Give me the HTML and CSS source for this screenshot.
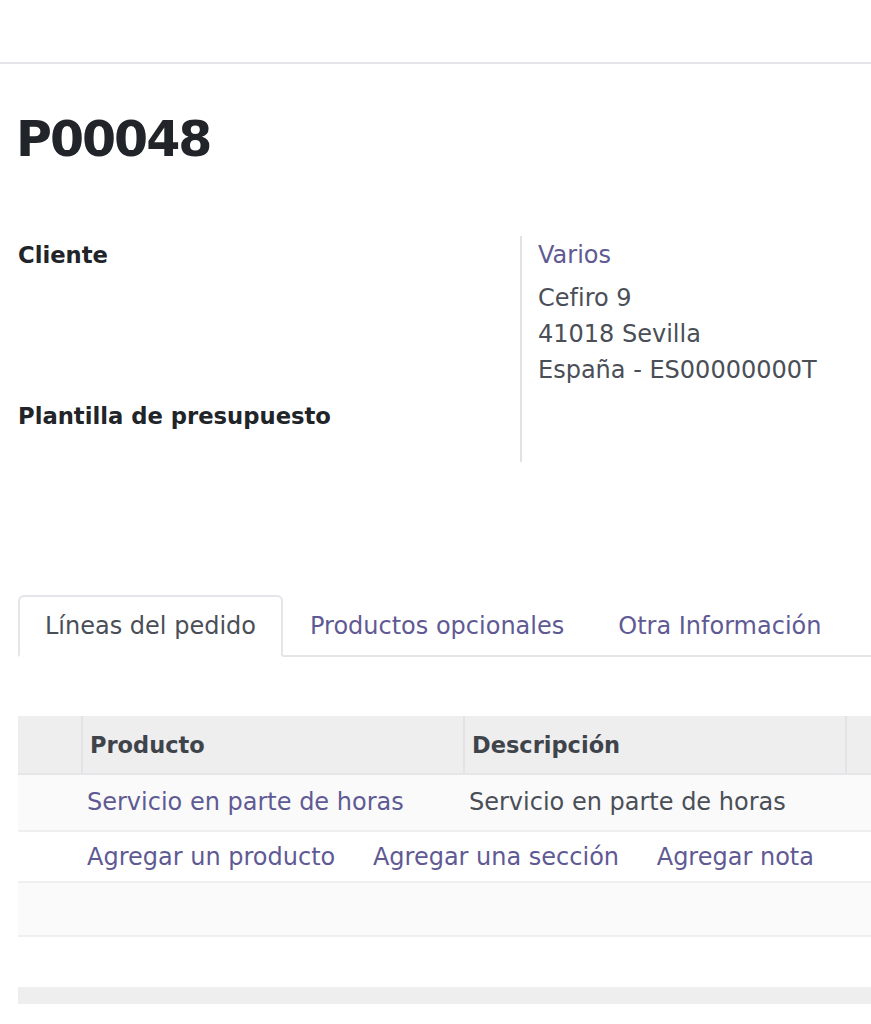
FILE: index.html
```html
<!DOCTYPE html>
<html lang="es">
<head>
<meta charset="UTF-8">
<meta name="viewport" content="width=device-width, initial-scale=1.0">
<title>P00048</title>
<link rel="stylesheet" href="styles.css">
</head>
<body>

<div class="control-panel"></div>

<div class="sheet">
    <h1 class="doc-name">P00048</h1>

    <div class="group">
        <div class="label">Cliente</div>
        <div class="value">
            <a class="link partner" href="#">Varios</a>
            <div class="address">
                <div>Cefiro 9</div>
                <div>41018 Sevilla</div>
                <div>España - ES00000000T</div>
            </div>
        </div>
        <div class="label label-last">Plantilla de presupuesto</div>
        <div class="value value-last"></div>
    </div>

    <ul class="tabs">
        <li class="tab active"><a href="#">Líneas del pedido</a></li>
        <li class="tab"><a href="#">Productos opcionales</a></li>
        <li class="tab"><a href="#">Otra Información</a></li>
    </ul>

    <div class="list-wrap">
        <table class="lines">
            <colgroup>
                <col style="width: 64px">
                <col style="width: 382px">
                <col style="width: 382px">
                <col>
            </colgroup>
            <thead>
                <tr>
                    <th class="handle"></th>
                    <th>Producto</th>
                    <th>Descripción</th>
                    <th></th>
                </tr>
            </thead>
            <tbody>
                <tr class="row-odd">
                    <td></td>
                    <td><a class="link" href="#">Servicio en parte de horas</a></td>
                    <td>Servicio en parte de horas</td>
                    <td></td>
                </tr>
                <tr class="add-row">
                    <td></td>
                    <td colspan="3" class="add-line">
                        <a class="link" href="#">Agregar un producto</a>
                        <a class="link" href="#">Agregar una sección</a>
                        <a class="link" href="#">Agregar nota</a>
                    </td>
                </tr>
                <tr class="row-odd empty"><td colspan="4"></td></tr>
                <tr class="empty last"><td colspan="4"></td></tr>
            </tbody>
            <tfoot>
                <tr><td colspan="4"></td></tr>
            </tfoot>
        </table>
    </div>
</div>

</body>
</html>
```

FILE: styles.css
```css
html, body {
    margin: 0;
    overflow: hidden;
}
body {
    font-family: "DejaVu Sans", "Noto Sans", sans-serif;
    font-size: 24px;
    color: #4a4f57;
    background: #fff;
    width: 871px;
}
.link {
    color: #5f5a94;
    text-decoration: none;
}
.control-panel {
    height: 62px;
    border-bottom: 2px solid #e4e4e9;
}
.sheet {
    padding-left: 18px;
    overflow: hidden;
}
.doc-name {
    margin: 51px 0 0 -2px;
    font-size: 49px;
    line-height: 49px;
    letter-spacing: -2px;
    font-weight: bold;
    color: #212529;
}

/* cliente / plantilla */
.group {
    display: grid;
    grid-template-columns: 502px 1fr;
    margin-top: 72px;
}
.label {
    font-size: 22.7px;
    font-weight: bold;
    line-height: 38px;
    color: #212529;
}
.value {
    border-left: 2px solid #e2e2e6;
    padding-left: 16px;
}
.partner {
    display: block;
    line-height: 38px;
}
.address {
    margin-top: 6px;
    line-height: 36px;
}
.label-last {
    padding: 9px 0 27px;
}

/* tabs */
.tabs {
    display: flex;
    list-style: none;
    margin: 133px 0 0;
    padding: 0;
    border-bottom: 2px solid #e4e4e9;
    width: 1000px;
}
.tab {
    margin-bottom: -2px;
}
.tab a {
    display: block;
    padding: 0 25px;
    line-height: 58px;
    border: 2px solid transparent;
    border-radius: 6px 6px 0 0;
    color: #5f5a94;
    text-decoration: none;
}
.tab.active a {
    color: #4a4f57;
    border-color: #e4e4e9 #e4e4e9 #fff;
    background: #fff;
}

/* order lines */
.list-wrap {
    margin-top: 59px;
}
.lines {
    width: 1100px;
    border-collapse: collapse;
    table-layout: fixed;
}
.lines th {
    height: 57px;
    padding: 0 0 0 7px;
    background: #eeeeef;
    border-left: 2px solid #e2e2e7;
    border-bottom: 2px solid #e6e6e8;
    font-size: 22.5px;
    font-weight: bold;
    text-align: left;
    color: #3f444b;
}
.lines th.handle {
    border-left: none;
}
.lines td {
    height: 52px;
    padding: 0 0 0 5px;
    border-bottom: 2px solid #efeff0;
    white-space: nowrap;
}
.lines tbody tr:first-child td {
    height: 53px;
    padding-bottom: 2px;
}
.lines .add-row td {
    height: 49px;
}
.lines tr.last td {
    height: 50px;
}
.row-odd td {
    background: #fafafa;
}
.add-line .link {
    margin-right: 30px;
}
.lines tfoot td {
    height: 15px;
    padding: 0;
    background: #eeeeef;
    border: none;
}
```
